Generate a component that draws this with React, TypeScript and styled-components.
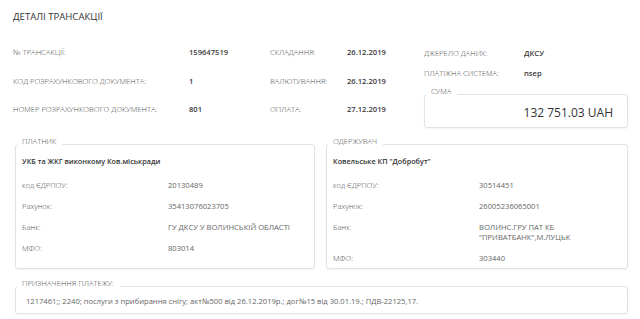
import React from "react";
import styled, { createGlobalStyle } from "styled-components";

const Global = createGlobalStyle`
  html, body { margin: 0; padding: 0; background: #fff; }
  body { font-family: "Open Sans", "Noto Sans", sans-serif; color: #333; }
`;

const Page = styled.div`
  width: 640px;
  height: 319px;
  box-sizing: border-box;
  padding: 10px 12px 0 13px;
  overflow: hidden;
`;

const Title = styled.h1`
  margin: 0;
  font-size: 9.6px;
  line-height: 14px;
  font-weight: 500;
  color: #333;
`;

const Top = styled.div`
  display: flex;
  margin-top: 14px;
`;

const InfoGrid = styled.div`
  display: grid;
  grid-template-columns: 176px 81px 77px 77px;
  grid-auto-rows: 28.5px;
  align-items: center;
`;

const Label = styled.span`
  font-size: 7.6px;
  line-height: 10px;
  font-weight: 300;
  color: #4d4d4d;
  white-space: nowrap;
`;

const Value = styled.span`
  font-size: 7.6px;
  line-height: 10px;
  font-weight: 600;
  color: #3a3a3a;
  white-space: nowrap;
`;

const RightCol = styled.div`
  display: flex;
  flex-direction: column;
  padding-top: 5px;
  width: 204px;
`;

const RightRow = styled.div`
  display: grid;
  grid-template-columns: 100px 1fr;
  align-items: center;
  height: 20px;
`;

const Fieldset = styled.div`
  position: relative;
  border: 1px solid #e2e2e2;
  border-radius: 3px;
  box-shadow: 0 1px 2px rgba(0, 0, 0, 0.05);
  box-sizing: border-box;
`;

const Legend = styled.span`
  position: absolute;
  top: -10px;
  left: 1px;
  padding: 0 6px 0 5px;
  background: #fff;
  font-size: 7.6px;
  line-height: 12px;
  font-weight: 300;
  color: #4d4d4d;
  white-space: nowrap;
`;

const SumBox = styled(Fieldset)`
  margin-top: 11px;
  height: 34px;
  display: flex;
  align-items: center;
  justify-content: flex-end;
  padding: 3px 14px 0 0;
`;

const Amount = styled.span`
  font-size: 12px;
  font-weight: 500;
  color: #333;
`;

const Parties = styled.div`
  display: grid;
  grid-template-columns: 300px 302px;
  column-gap: 11px;
  margin: 16px 0 0 2px;
`;

const PartyBox = styled(Fieldset)`
  padding: 10px 6px 0 6px;
  height: 125px;
`;

const PartyName = styled.div`
  font-size: 7.25px;
  line-height: 12px;
  font-weight: 600;
  color: #333;
  margin-bottom: 7px;
  white-space: nowrap;
`;

const PartyRow = styled.div`
  display: grid;
  grid-template-columns: 146px 1fr;
  padding: 5.5px 0;
`;

const PartyLabel = styled.span`
  font-size: 7.6px;
  line-height: 10px;
  font-weight: 300;
  color: #4d4d4d;
`;

const PartyValue = styled.span`
  font-size: 7.6px;
  line-height: 10px;
  color: #666;
`;

const PurposeBox = styled(Fieldset)`
  margin: 17px 0 0 2px;
  height: 28px;
  display: flex;
  align-items: center;
  padding: 1px 10px 0 10px;
`;

const PurposeText = styled.span`
  font-size: 7.6px;
  color: #666;
  white-space: nowrap;
`;

type Party = {
  legend: string;
  name: string;
  rows: [string, React.ReactNode][];
};

const parties: Party[] = [
  {
    legend: "ПЛАТНИК",
    name: "УКБ та ЖКГ виконкому Ков.міськради",
    rows: [
      ["код ЄДРПОУ:", "20130489"],
      ["Рахунок:", "35413076023705"],
      ["Банк:", "ГУ ДКСУ У ВОЛИНСЬКІЙ ОБЛАСТІ"],
      ["МФО:", "803014"],
    ],
  },
  {
    legend: "ОДЕРЖУВАЧ",
    name: "Ковельське КП \"Добробут\"",
    rows: [
      ["код ЄДРПОУ:", "30514451"],
      ["Рахунок:", "26005236065001"],
      [
        "Банк:",
        <>
          ВОЛИНС.ГРУ ПАТ КБ
          <br />
          "ПРИВАТБАНК",М.ЛУЦЬК
        </>,
      ],
      ["МФО:", "303440"],
    ],
  },
];

const info: [string, string, string, string][] = [
  ["№ ТРАНСАКЦІЇ:", "159647519", "СКЛАДАННЯ:", "26.12.2019"],
  ["КОД РОЗРАХУНКОВОГО ДОКУМЕНТА:", "1", "ВАЛЮТУВАННЯ:", "26.12.2019"],
  ["НОМЕР РОЗРАХУНКОВОГО ДОКУМЕНТА:", "801", "ОПЛАТА:", "27.12.2019"],
];

export default function App() {
  return (
    <>
      <Global />
      <Page>
        <Title>ДЕТАЛІ ТРАНСАКЦІЇ</Title>
        <Top>
          <InfoGrid>
            {info.map(([l1, v1, l2, v2]) => (
              <React.Fragment key={l1}>
                <Label>{l1}</Label>
                <Value>{v1}</Value>
                <Label>{l2}</Label>
                <Value>{v2}</Value>
              </React.Fragment>
            ))}
          </InfoGrid>
          <RightCol>
            <RightRow>
              <Label>ДЖЕРЕЛО ДАНИХ:</Label>
              <Value>ДКСУ</Value>
            </RightRow>
            <RightRow>
              <Label>ПЛАТІЖНА СИСТЕМА:</Label>
              <Value>nsep</Value>
            </RightRow>
            <SumBox>
              <Legend>СУМА</Legend>
              <Amount>132 751.03 UAH</Amount>
            </SumBox>
          </RightCol>
        </Top>
        <Parties>
          {parties.map((p) => (
            <PartyBox key={p.legend}>
              <Legend>{p.legend}</Legend>
              <PartyName>{p.name}</PartyName>
              {p.rows.map(([l, v]) => (
                <PartyRow key={l}>
                  <PartyLabel>{l}</PartyLabel>
                  <PartyValue>{v}</PartyValue>
                </PartyRow>
              ))}
            </PartyBox>
          ))}
        </Parties>
        <PurposeBox>
          <Legend>ПРИЗНАЧЕННЯ ПЛАТЕЖУ:</Legend>
          <PurposeText>
            1217461;; 2240; послуги з прибирання снігу; акт№500 від 26.12.2019р.; дог№15 від 30.01.19.; ПДВ-22125,17.
          </PurposeText>
        </PurposeBox>
      </Page>
    </>
  );
}
